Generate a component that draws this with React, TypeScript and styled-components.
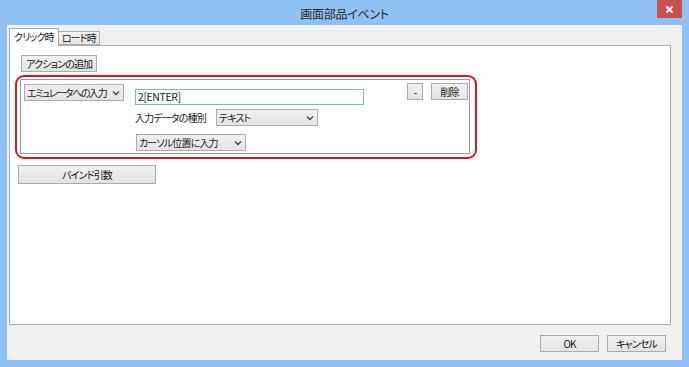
import React from 'react'
import styled, { createGlobalStyle } from 'styled-components'

const GlobalStyle = createGlobalStyle`
  html, body {
    margin: 0;
    padding: 0;
    background: #ffffff;
  }
  body {
    font-family: "Noto Sans CJK JP", "Noto Sans", sans-serif;
    font-size: 12px;
    font-feature-settings: "palt";
    color: #1a1a1a;
  }
  * {
    box-sizing: border-box;
  }
`

// compact dialog text, roughly the width of the old Windows UI font
const uiText = `
  font-size: 10px;
  letter-spacing: -0.85px;
  white-space: nowrap;
`

const Frame = styled.div`
  width: 689px;
  height: 367px;
  background: #8fc1f3;
  padding: 0 7px 7px;
  display: flex;
  flex-direction: column;
`

const TitleBar = styled.div`
  height: 25px;
  display: grid;
  grid-template-columns: 1fr auto 1fr;
  align-items: start;
`

const Title = styled.div`
  grid-column: 2;
  line-height: 27px;
  font-size: 12px;
  letter-spacing: -0.3px;
  color: #2b2b2b;
`

const CloseButton = styled.div`
  grid-column: 3;
  justify-self: end;
  width: 25px;
  height: 18px;
  background: #c9504d;
  display: flex;
  align-items: center;
  justify-content: center;
`

const Body = styled.div`
  flex: 1;
  background: #f0f0f0;
  display: flex;
  flex-direction: column;
  padding: 3px 11px 0 2px;
`

const TabStrip = styled.div`
  height: 17px;
  display: flex;
  align-items: flex-end;
  position: relative;
  z-index: 1;
`

const Tab = styled.div<{ $active?: boolean }>`
  ${uiText}
  height: ${p => (p.$active ? 18 : 14)}px;
  margin-bottom: ${p => (p.$active ? -1 : 0)}px;
  margin-left: ${p => (p.$active ? 0 : -1)}px;
  padding: 0 ${p => (p.$active ? 4 : 3)}px;
  background: ${p => (p.$active ? '#ffffff' : 'linear-gradient(#f2f2f2, #e6e6e6)')};
  border: 1px solid #acacac;
  border-bottom: ${p => (p.$active ? 'none' : '1px solid #acacac')};
  line-height: ${p => (p.$active ? 16 : 12)}px;
`

const Panel = styled.div`
  height: 280px;
  background: #ffffff;
  border: 1px solid #acacac;
  display: flex;
  flex-direction: column;
  align-items: flex-start;
  padding: 9px 0 0 5px;
`

const Button = styled.div<{ $w?: number; $h?: number }>`
  ${uiText}
  width: ${p => (p.$w ? `${p.$w}px` : 'auto')};
  height: ${p => p.$h ?? 17}px;
  padding: 0 4px;
  background: linear-gradient(#f1f1f1, #e3e3e3);
  border: 1px solid #acacac;
  display: flex;
  align-items: center;
  justify-content: center;
  color: #111;
`

const AddButton = styled(Button)`
  margin-left: 6px;
`

const BindButton = styled(Button)`
  margin-left: 3px;
  margin-top: 6px;
`

const Highlight = styled.div`
  margin-top: 3px;
  width: 462px;
  border: 2px solid #e01420;
  border-radius: 9px;
  padding: 2px 5px 3px 3px;
`

const GroupBox = styled.div`
  height: 75px;
  border: 1px solid #9a9a9a;
  box-shadow: inset 1px 1px 0 #ffffff;
  display: flex;
  align-items: flex-start;
  padding: 4px 1px 0 3px;
`

const Select = styled.div<{ $w: number; $tight?: boolean }>`
  ${uiText}
  ${p => (p.$tight ? 'letter-spacing: -1.4px;' : '')}
  width: ${p => p.$w}px;
  height: 17px;
  flex-shrink: 0;
  background: linear-gradient(#f0f0f0, #e4e4e4);
  border: 1px solid #acacac;
  display: flex;
  align-items: center;
  justify-content: space-between;
  padding: 0 3px 0 2px;
`

const Column = styled.div`
  margin-left: 11px;
  margin-top: 5px;
  display: flex;
  flex-direction: column;
  align-items: flex-start;
`

const TextInput = styled.div`
  width: 229px;
  height: 16px;
  border: 1px solid #7ab3e8;
  background: #ffffff;
  padding: 0 2px;
  font-size: 10.5px;
  letter-spacing: -0.4px;
  line-height: 14px;
`

const FieldRow = styled.div`
  margin-top: 4px;
  display: flex;
  align-items: center;
  gap: 9px;
`

const Label = styled.span`
  ${uiText}
  width: 72px;
`

const LastSelect = styled.div`
  margin-top: 8px;
  margin-left: 1px;
`

const Actions = styled.div`
  margin-left: auto;
  margin-top: -1px;
  display: flex;
  gap: 8px;
`

const Footer = styled.div`
  flex: 1;
  display: flex;
  justify-content: flex-end;
  align-items: flex-start;
  gap: 8px;
  padding: 10px 5px 0 0;
`

const Chevron = () => (
  <svg width="8" height="6" viewBox="0 0 8 6">
    <polyline points="1,1.5 4,4.5 7,1.5" fill="none" stroke="#444" strokeWidth="1.3" />
  </svg>
)

const CloseIcon = () => (
  <svg width="9" height="9" viewBox="0 0 9 9">
    <path d="M1.5 1.5 L7.5 7.5 M7.5 1.5 L1.5 7.5" stroke="#ffffff" strokeWidth="2" />
  </svg>
)

const App = () => {
  return (
    <>
      <GlobalStyle />
      <Frame>
        <TitleBar>
          <Title>画面部品イベント</Title>
          <CloseButton>
            <CloseIcon />
          </CloseButton>
        </TitleBar>
        <Body>
          <TabStrip>
            <Tab $active>クリック時</Tab>
            <Tab>ロード時</Tab>
          </TabStrip>
          <Panel>
            <AddButton>アクションの追加</AddButton>
            <Highlight>
              <GroupBox>
                <Select $w={100} $tight>
                  <span>エミュレータへの入力</span>
                  <Chevron />
                </Select>
                <Column>
                  <TextInput>2[ENTER]</TextInput>
                  <FieldRow>
                    <Label>入力データの種別</Label>
                    <Select $w={102}>
                      <span>テキスト</span>
                      <Chevron />
                    </Select>
                  </FieldRow>
                  <LastSelect>
                    <Select $w={110}>
                      <span>カーソル位置に入力</span>
                      <Chevron />
                    </Select>
                  </LastSelect>
                </Column>
                <Actions>
                  <Button $w={16}>-</Button>
                  <Button $w={37}>削除</Button>
                </Actions>
              </GroupBox>
            </Highlight>
            <BindButton $w={138} $h={19}>バインド引数</BindButton>
          </Panel>
          <Footer>
            <Button $w={59}>OK</Button>
            <Button $w={59}>キャンセル</Button>
          </Footer>
        </Body>
      </Frame>
    </>
  )
}

export default App
